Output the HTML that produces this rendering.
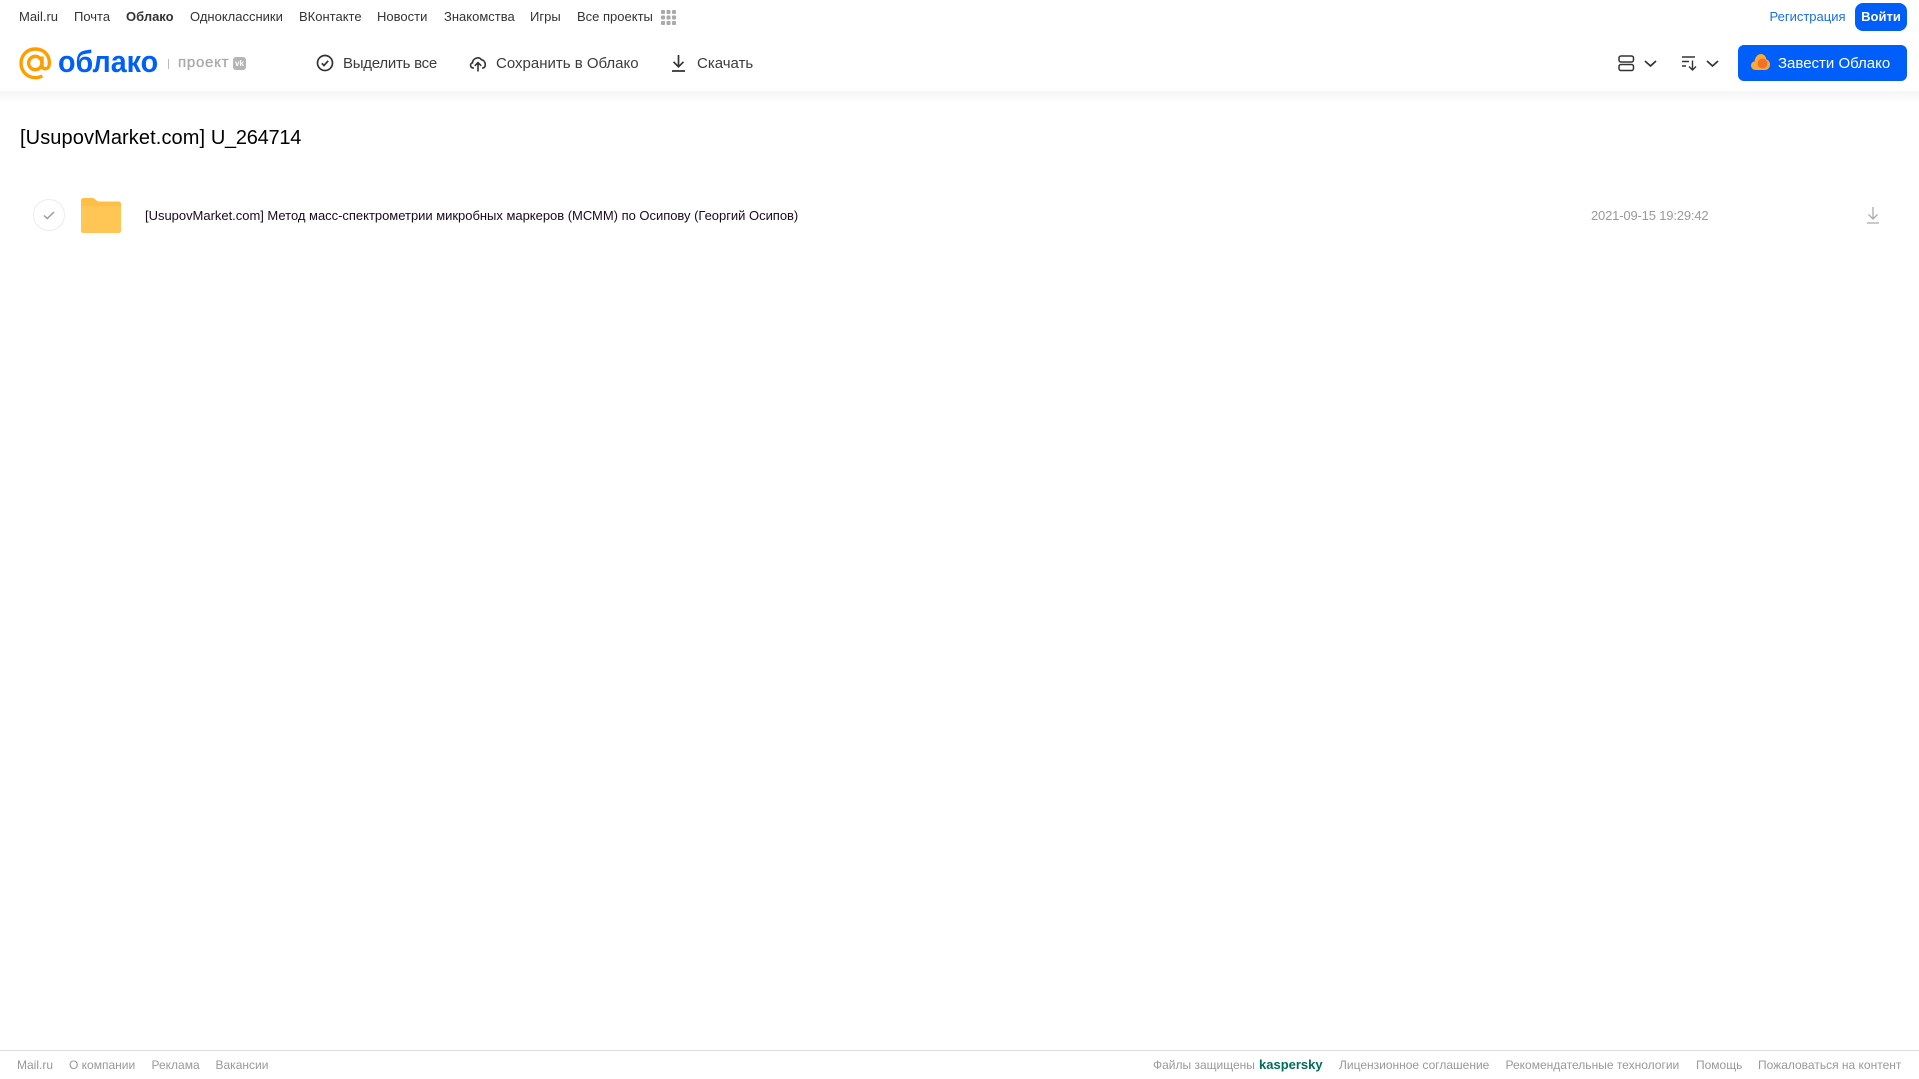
<!DOCTYPE html>
<html lang="ru"><head><meta charset="utf-8"><title>Облако</title>
<style>
html,body{margin:0;padding:0;background:#fff;width:1919px;height:1079px;overflow:hidden}
body{font-family:"Liberation Sans",sans-serif;position:relative}
.t{position:absolute;white-space:nowrap;line-height:20px}
.n{top:7px;font-size:13px;color:#333}
.h{top:54px;font-size:15px;color:#3c3c3c}
.f{top:1055px;font-size:12px;color:#999}
svg{position:absolute;overflow:visible}
</style></head><body>
<div style="position:absolute;left:0;top:91px;width:1919px;height:12px;background:linear-gradient(#f5f5f5,#fff)"></div>
<div class="t n" style="left:19px">Mail.ru</div>
<div class="t n" style="left:74px">Почта</div>
<div class="t n" style="left:126px;font-weight:bold">Облако</div>
<div class="t n" style="left:190px">Одноклассники</div>
<div class="t n" style="left:299px">ВКонтакте</div>
<div class="t n" style="left:377px">Новости</div>
<div class="t n" style="left:444px">Знакомства</div>
<div class="t n" style="left:530px">Игры</div>
<div class="t n" style="left:577px">Все проекты</div>
<svg style="left:661px;top:10px" width="15" height="15" fill="#aaa"><rect width="4" height="4" rx="1"/><rect x="5.500" width="4" height="4" rx="1"/><rect x="11" width="4" height="4" rx="1"/><rect y="5.500" width="4" height="4" rx="1"/><rect x="5.500" y="5.500" width="4" height="4" rx="1"/><rect x="11" y="5.500" width="4" height="4" rx="1"/><rect y="11" width="4" height="4" rx="1"/><rect x="5.500" y="11" width="4" height="4" rx="1"/><rect x="11" y="11" width="4" height="4" rx="1"/></svg>
<div class="t n" style="left:1769.500px;color:#1a6fe8">Регистрация</div>
<div class="t" style="left:1855px;top:3px;width:52px;height:28px;line-height:28px;background:#005ff9;border-radius:8px;color:#fff;font-size:13px;font-weight:bold;text-align:center">Войти</div>

<svg style="left:19px;top:47px" width="33" height="33" viewBox="0 0 33 33" fill="none" stroke="#ff9e00" stroke-width="3.400"><circle cx="16.300" cy="16" r="6.700"/><path d="M23 9.500V18.500C23 23 29.800 23 30.300 17.500C31.200 8 24.500 2 16.300 2C8 2 2 8.500 2 16.300C2 24.500 8.500 30.700 16.300 30.700C19 30.700 21.300 30 23.300 28.800"/></svg>
<div class="t" style="left:58px;top:44px;font-size:31px;line-height:36px;color:#005ff9;font-weight:bold;transform:scaleX(.925);transform-origin:0 50%">облако</div>
<div style="position:absolute;left:168px;top:59px;width:1px;height:10px;background:#bbb"></div>
<div class="t" style="left:178px;top:53px;font-size:15px;color:#aaa;letter-spacing:.75px;-webkit-text-stroke:.35px #aaa">проект</div>
<div class="t" style="left:233px;top:57px;width:13px;height:13px;line-height:13px;background:#b5b5b5;border-radius:3px;color:#fff;font-size:8px;font-weight:bold;text-align:center">vk</div>

<svg style="left:316px;top:54px" width="18" height="18" fill="none" stroke="#333" stroke-width="1.700"><circle cx="9" cy="9" r="7.500"/><path d="M5.800 9.300L8 11.500L12.200 6.800"/></svg>
<div class="t h" style="left:343px;letter-spacing:-.25px">Выделить все</div>
<svg style="left:469px;top:55px" width="18" height="17" fill="none" stroke="#333" stroke-width="1.600"><path d="M5 13H4.500C1 13 .5 8.500 3.500 7.800C4 3 10 1 12.500 4.800C16 4.500 18.500 12.500 13.500 13H13M9 16.500V8M5.800 10.800L9 7.600L12.200 10.800"/></svg>
<div class="t h" style="left:496px">Сохранить в Облако</div>
<svg style="left:671px;top:54px" width="15" height="18" fill="none" stroke="#333" stroke-width="1.700"><path d="M7.500 1V12.500M2.500 7.800L7.500 12.800L12.500 7.800M1 17H14"/></svg>
<div class="t h" style="left:697px">Скачать</div>

<svg style="left:1618px;top:55px" width="17" height="17" fill="none" stroke="#333" stroke-width="1.500"><rect x="1" y="1" width="14.500" height="6" rx="2"/><rect x="1" y="9.500" width="14.500" height="6" rx="2"/></svg>
<svg style="left:1643.500px;top:60px" width="13" height="7" fill="none" stroke="#333" stroke-width="1.700"><path d="M1 1L6.500 6L12 1"/></svg>
<svg style="left:1681px;top:56px" width="17" height="15" fill="none" stroke="#333" stroke-width="1.400"><path d="M1 1H14M1 5.500H8M1 10H5M11.500 4.500V13.500M8 10.500L11.500 14L15 10.500"/></svg>
<svg style="left:1705.500px;top:60px" width="13" height="7" fill="none" stroke="#333" stroke-width="1.700"><path d="M1 1L6.500 6L12 1"/></svg>
<div style="position:absolute;left:1738px;top:45px;width:169px;height:36px;background:#005ff9;border-radius:6px"></div>
<svg style="left:1751px;top:54px" width="19" height="17"><path d="M5 16C1.500 16 0 13.500 0 11.500C0 9 2 7.500 3.500 7.500C4 3 7 0 10 0C13 0 15 2.500 15.500 5.500C17.500 6 19 8 19 10.500C19 13.500 17 16 14 16Z" fill="#ffa930"/><circle cx="11.500" cy="9.500" r="5" fill="#f4702a"/></svg>
<div class="t h" style="left:1778px;color:#fff">Завести Облако</div>

<div class="t" style="left:20px;top:126px;font-size:20px;line-height:24px;color:#000"><span style="letter-spacing:.1px">[UsupovMarket.com] </span><span style="letter-spacing:-.25px">U_264714</span></div>
<div style="position:absolute;left:33px;top:199px;width:30px;height:30px;border:1px solid #ececec;border-radius:50%"></div>
<svg style="left:43px;top:211px" width="12" height="9" fill="none" stroke="#999" stroke-width="1.500"><path d="M1 4.500L4.300 7.500L11 1"/></svg>
<svg style="left:81px;top:198px" width="40" height="35"><path d="M0 3C0 1 1 0 3 0H11C13 0 14 1 15 2C16 3 17 3.500 18 3.500H37C39 3.500 40 4.500 40 6V32C40 34 39 35 37 35H3C1 35 0 34 0 32Z" fill="#ffbe45"/><path d="M0 8H40V32C40 34 39 35 37 35H3C1 35 0 34 0 32Z" fill="#ffc555"/></svg>
<div class="t" style="left:145px;top:206px;font-size:13px;color:#1a0a20;letter-spacing:-.02px">[UsupovMarket.com] Метод масс-спектрометрии микробных маркеров (МСММ) по Осипову (Георгий Осипов)</div>
<div class="t" style="left:1591px;top:206px;font-size:13px;color:#999;letter-spacing:-.17px">2021-09-15 19:29:42</div>
<svg style="left:1866px;top:207px" width="14" height="17" fill="none" stroke="#aaa" stroke-width="1.300"><path d="M7 0V11.500M2.500 7.500L7 12L11.500 7.500M1 16H13"/></svg>

<div style="position:absolute;left:0;top:1050px;width:1919px;height:1px;background:#ddd"></div>
<div class="t f" style="left:17px">Mail.ru</div>
<div class="t f" style="left:69px">О компании</div>
<div class="t f" style="left:151.500px">Реклама</div>
<div class="t f" style="left:215.500px">Вакансии</div>
<div class="t f" style="left:1153px">Файлы защищены</div>
<div class="t f" style="left:1259px;color:#006d5c;font-weight:bold;font-size:13px">kaspersky</div>
<div class="t f" style="left:1339px">Лицензионное соглашение</div>
<div class="t f" style="left:1505.500px">Рекомендательные технологии</div>
<div class="t f" style="left:1696px">Помощь</div>
<div class="t f" style="left:1758px">Пожаловаться на контент</div>
</body></html>
